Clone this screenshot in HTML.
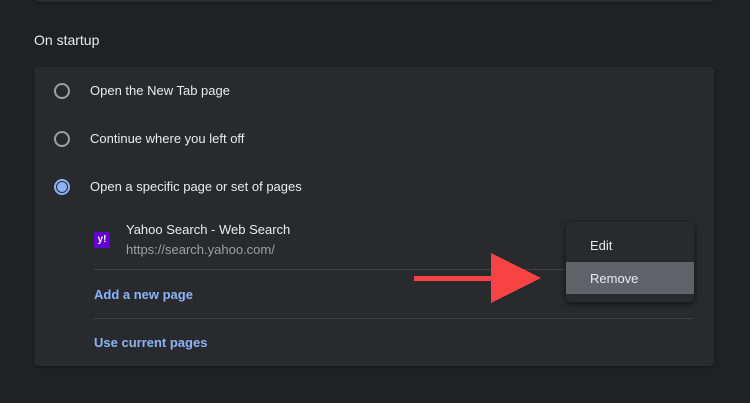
<!DOCTYPE html>
<html><head><style>
body{margin:0;width:750px;height:403px;background:#202124;font-family:"Liberation Sans",sans-serif;position:relative;overflow:hidden;color:#e8eaed}
.a{position:absolute}
.card{background:#292a2d;border-radius:4px;box-shadow:0 1px 2px rgba(0,0,0,.4)}
.radio{width:12px;height:12px;border:2px solid #9aa0a6;border-radius:50%}
.t{font-size:13px;color:#e8eaed}
.link{font-size:13px;color:#8ab4f8;font-weight:bold}
.sep{height:1px;background:#3f4042}
</style></head><body>
<div class="a card" style="left:34px;top:-20px;width:680px;height:22px"></div>
<div class="a" style="left:34px;top:32px;font-size:14px;color:#e8eaed">On startup</div>
<div class="a card" style="left:34px;top:67px;width:680px;height:299px"></div>
<div class="a radio" style="left:54px;top:83px"></div>
<div class="a t" style="left:90px;top:83px">Open the New Tab page</div>
<div class="a radio" style="left:54px;top:131px"></div>
<div class="a t" style="left:90px;top:131px">Continue where you left off</div>
<div class="a radio" style="left:54px;top:179px;border-color:#8ab4f8"></div>
<div class="a" style="left:57px;top:182px;width:10px;height:10px;border-radius:50%;background:#8ab4f8"></div>
<div class="a t" style="left:90px;top:179px">Open a specific page or set of pages</div>
<div class="a" style="left:94px;top:232px;width:16px;height:16px;background:#6001d2;color:#fff;font-size:10px;font-weight:bold;text-align:center;line-height:16px">y!</div>
<div class="a t" style="left:126px;top:222px">Yahoo Search - Web Search</div>
<div class="a" style="left:126px;top:242px;font-size:13px;color:#9aa0a6">https://search.yahoo.com/</div>
<div class="a sep" style="left:94px;top:269px;width:600px"></div>
<div class="a link" style="left:94px;top:287px">Add a new page</div>
<div class="a sep" style="left:94px;top:318px;width:600px"></div>
<div class="a link" style="left:94px;top:335px">Use current pages</div>
<div class="a" style="left:566px;top:222px;width:128px;height:80px;background:#292a2d;border-radius:4px;box-shadow:0 2px 6px rgba(0,0,0,.6)"></div>
<div class="a" style="left:566px;top:262px;width:128px;height:32px;background:#5f6368"></div>
<div class="a t" style="left:590px;top:238px">Edit</div>
<div class="a t" style="left:590px;top:271px">Remove</div>
<svg class="a" style="left:0;top:0" width="750" height="403"><rect x="414" y="276" width="80" height="5" fill="#f74343"/><polygon points="491,253 491,303 541,278" fill="#f74343"/></svg>
</body></html>
